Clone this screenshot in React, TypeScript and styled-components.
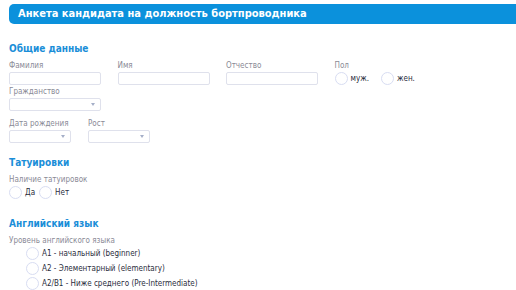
import React from 'react';
import styled, { createGlobalStyle } from 'styled-components';

const GlobalStyle = createGlobalStyle`
  body {
    margin: 0;
    background: #fff;
    font-family: "DejaVu Sans Condensed", "DejaVu Sans", Verdana, sans-serif;
  }
`;

const Page = styled.div`
  padding: 4px 0 0 9px;
`;

const TitleBar = styled.h1`
  margin: 0;
  height: 20px;
  line-height: 20px;
  padding-left: 9px;
  background: #0b91dc;
  color: #fff;
  font-size: 11px;
  font-weight: bold;
  border-radius: 5px 0 0 5px;
`;

const SectionTitle = styled.h2<{ $top: number }>`
  margin: ${(p) => p.$top}px 0 0;
  font-size: 10px;
  line-height: 12px;
  font-weight: bold;
  color: #1a8ed8;
`;

const Row = styled.div<{ $top: number; $col: number }>`
  display: grid;
  grid-template-columns: repeat(4, ${(p) => p.$col}px);
  margin-top: ${(p) => p.$top}px;
`;

const Field = styled.div<{ $top?: number }>`
  display: flex;
  flex-direction: column;
  margin-top: ${(p) => p.$top ?? 0}px;
`;

const Label = styled.label`
  font-size: 8px;
  line-height: 11px;
  color: #8a8a96;
  margin-bottom: 1px;
`;

const TextInput = styled.div<{ $w: number }>`
  box-sizing: border-box;
  width: ${(p) => p.$w}px;
  height: 13px;
  border: 1px solid #dfe1ec;
  border-radius: 2px;
  background: #fff;
`;

const Select = styled(TextInput)`
  position: relative;

  &::after {
    content: '';
    position: absolute;
    right: 5px;
    top: 4px;
    border-left: 2.5px solid transparent;
    border-right: 2.5px solid transparent;
    border-top: 3px solid #a5afc8;
  }
`;

const RadioGroup = styled.div<{ $gap: number }>`
  display: flex;
  gap: ${(p) => p.$gap}px;
`;

const RadioList = styled.div`
  display: flex;
  flex-direction: column;
  gap: 2px;
  padding-left: 17px;
`;

const RadioItem = styled.label`
  display: flex;
  align-items: center;
  gap: 3px;
  font-size: 8px;
  line-height: 13px;
  color: #2a2d3c;
`;

const Circle = styled.span`
  box-sizing: border-box;
  width: 13px;
  height: 13px;
  border: 1px solid #d8ddf2;
  border-radius: 50%;
  background: #fff;
`;

const Radio = ({ children }: { children: React.ReactNode }) => (
  <RadioItem>
    <Circle />
    {children}
  </RadioItem>
);

const englishLevels = [
  'A1 - начальный (beginner)',
  'A2 - Элементарный (elementary)',
  'A2/B1 - Ниже среднего (Pre-Intermediate)',
];

export default function App() {
  return (
    <>
      <GlobalStyle />
      <Page>
        <TitleBar>Анкета кандидата на должность бортпроводника</TitleBar>

        {/* Общие данные */}
        <SectionTitle $top={19}>Общие данные</SectionTitle>
        <Row $top={5} $col={108.5}>
          <Field>
            <Label>Фамилия</Label>
            <TextInput $w={92} />
          </Field>
          <Field>
            <Label>Имя</Label>
            <TextInput $w={92} />
          </Field>
          <Field>
            <Label>Отчество</Label>
            <TextInput $w={92} />
          </Field>
          <Field>
            <Label>Пол</Label>
            <RadioGroup $gap={12}>
              <Radio>муж.</Radio>
              <Radio>жен.</Radio>
            </RadioGroup>
          </Field>
        </Row>
        <Row $top={1} $col={108.5}>
          <Field>
            <Label>Гражданство</Label>
            <Select $w={92} />
          </Field>
        </Row>
        <Row $top={7} $col={79}>
          <Field>
            <Label>Дата рождения</Label>
            <Select $w={62} />
          </Field>
          <Field>
            <Label>Рост</Label>
            <Select $w={62} />
          </Field>
        </Row>

        {/* Татуировки */}
        <SectionTitle $top={14}>Татуировки</SectionTitle>
        <Field $top={5}>
          <Label>Наличие татуировок</Label>
          <RadioGroup $gap={4}>
            <Radio>Да</Radio>
            <Radio>Нет</Radio>
          </RadioGroup>
        </Field>

        {/* Английский язык */}
        <SectionTitle $top={19}>Английский язык</SectionTitle>
        <Field $top={5}>
          <Label>Уровень английского языка</Label>
          <RadioList>
            {englishLevels.map((level) => (
              <Radio key={level}>{level}</Radio>
            ))}
          </RadioList>
        </Field>
      </Page>
    </>
  );
}
